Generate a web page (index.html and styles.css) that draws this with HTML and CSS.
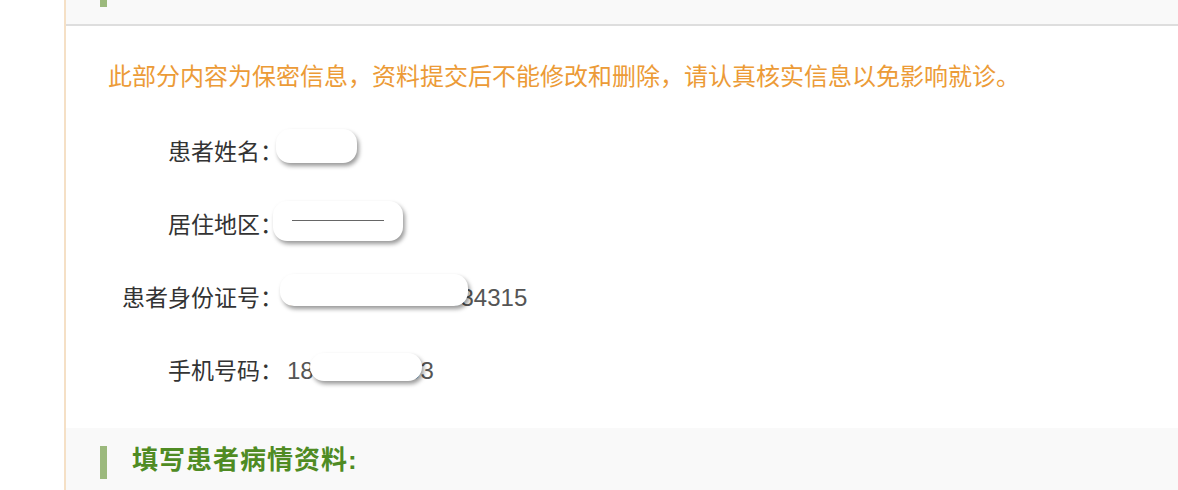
FILE: index.html
```html
<!DOCTYPE html>
<html>
<head>
    <meta charset="utf-8" />
    <title>填写患者资料</title>
    <link rel="stylesheet" href="styles.css">
</head>
<body>
    <div class="panel">
        <div class="sec-head sec-top">
            <span class="bar"></span>
            <h2>填写就诊人基本资料（仅医生可查看）</h2>
        </div>
        <div class="sec-body">
            <p class="notice">此部分内容为保密信息，资料提交后不能修改和删除，请认真核实信息以免影响就诊。</p>
            <ul class="info">
                <li>
                    <span class="label">患者姓名：</span>
                    <span class="value">李**<i class="mask mask-name"></i></span>
                </li>
                <li>
                    <span class="label">居住地区：</span>
                    <span class="value">浙江 杭州<i class="mask mask-area"><b></b></i></span>
                </li>
                <li>
                    <span class="label">患者身份证号：</span>
                    <span class="value">330100198801034315<i class="mask mask-id"></i></span>
                </li>
                <li>
                    <span class="label">手机号码：</span>
                    <span class="value">18800000003<i class="mask mask-phone"></i></span>
                </li>
            </ul>
        </div>
        <div class="sec-head">
            <span class="bar"></span>
            <h2>填写患者病情资料:</h2>
        </div>
    </div>
</body>
</html>
```

FILE: styles.css
```css
html, body {
    overflow: hidden;
}

body, div, ul, li, p, h2 {
    margin: 0;
    padding: 0;
}

body {
    background: #fff;
    font-family: "Liberation Sans", "Noto Sans CJK SC", sans-serif;
    color: #333;
}

.panel {
    margin-left: 64px;
    border-left: 2px solid #f5e0c6;
}

.sec-head {
    display: flex;
    align-items: center;
    height: 68px;
    background: #f9f9f9;
}

.sec-top {
    margin-top: -44px;
    border-bottom: 2px solid #dedede;
}

    .sec-head .bar {
        width: 7px;
        height: 33px;
        margin: 0 25px 0 34px;
        background: #9cb97d;
    }

    .sec-head h2 {
        font-size: 26px;
        line-height: 30px;
        font-weight: bold;
        letter-spacing: 1px;
        color: #4f8b23;
        margin-bottom: 4px;
    }

.sec-body {
    padding: 33px 0 21px 42px;
}

.notice {
    font-size: 24px;
    line-height: 36px;
    color: #ec9b37;
}

.info {
    list-style-type: none;
    margin-top: 20px;
}

    .info li {
        display: flex;
        align-items: center;
        height: 73px;
    }

    .info .label {
        width: 175px;
        text-align: right;
        font-size: 23px;
        line-height: 34px;
        color: #333;
    }

    .info .value {
        position: relative;
        margin-left: 4px;
        font-size: 24px;
        line-height: 34px;
        color: #555;
    }

.mask {
    position: absolute;
    background: #fff;
    border-radius: 14px;
    box-shadow: 2px 3px 4px rgba(0, 0, 0, 0.4);
}

.mask-name {
    left: -11px;
    top: -6px;
    width: 81px;
    height: 34px;
}

.mask-area {
    left: -14px;
    top: -7px;
    width: 130px;
    height: 40px;
}

    .mask-area b {
        position: absolute;
        left: 19px;
        top: 19px;
        width: 92px;
        height: 1px;
        background: #666;
    }

.mask-id {
    left: -7px;
    top: -7px;
    width: 188px;
    height: 32px;
}

.mask-phone {
    left: 23px;
    top: -1px;
    width: 112px;
    height: 28px;
}
```
